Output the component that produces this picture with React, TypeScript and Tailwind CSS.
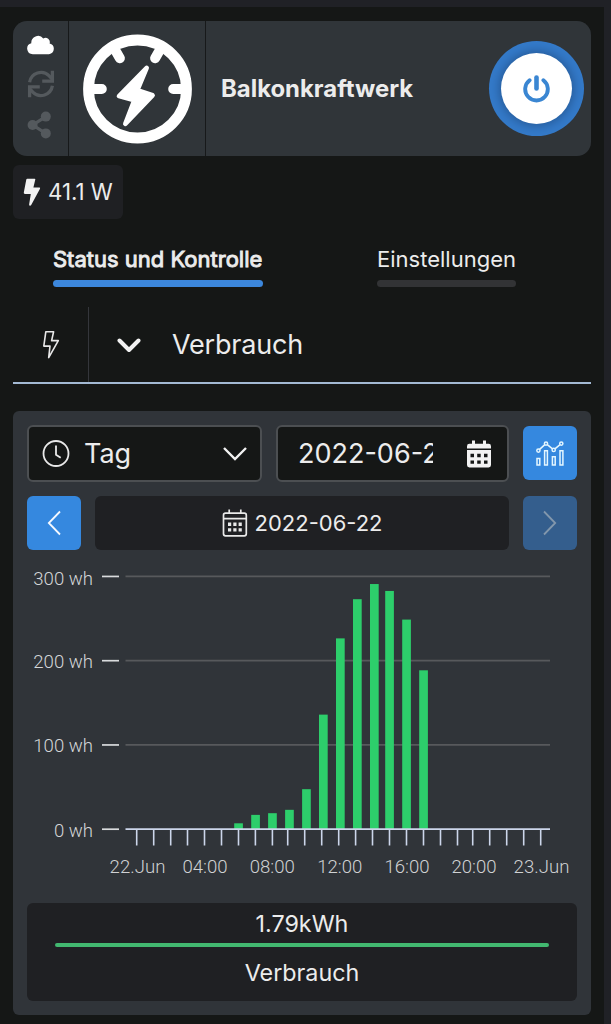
import type { ReactNode } from "react";

type Bar = { x: number; wh: number };

const ZERO_Y = 265.2;
const PX_PER_WH = 0.8425;

const GRID = [300, 200, 100, 0];

const TICKS = [
  109.7, 126.7, 143.7, 160.5, 177.5, 194.5, 211.5, 228.4, 245.4, 260.7, 277.7,
  294.7, 311.7, 328.6, 345.5, 362.5, 379.5, 396.5, 413.5, 430.5, 445.7, 462.7,
  479.7, 496.7, 513.7,
];

const HOURS = [
  { x: 110.5, label: "22.Jun" },
  { x: 178, label: "04:00" },
  { x: 245.3, label: "08:00" },
  { x: 312.8, label: "12:00" },
  { x: 380, label: "16:00" },
  { x: 447, label: "20:00" },
  { x: 514.5, label: "23.Jun" },
];

const BARS: Bar[] = [
  { x: 207.2, wh: 7 },
  { x: 224.2, wh: 17 },
  { x: 241.1, wh: 19 },
  { x: 258.1, wh: 23 },
  { x: 275.1, wh: 47.5 },
  { x: 292, wh: 136 },
  { x: 309, wh: 226.5 },
  { x: 326, wh: 273 },
  { x: 343, wh: 291 },
  { x: 358.2, wh: 282.8 },
  { x: 375.2, wh: 248.8 },
  { x: 392.2, wh: 188.6 },
];

function CloudIcon() {
  return (
    <svg width="28" height="20" viewBox="0 0 28 20" fill="#fff">
      <path d="M5.8 19.2A5.6 5.6 0 0 1 4.3 8.2A6.8 6.8 0 0 1 16.3 3.4A4.3 4.3 0 0 1 22.6 8.4A5.5 5.5 0 0 1 22 19.2Z" />
    </svg>
  );
}

function SyncIcon() {
  return (
    <svg width="28" height="28" viewBox="0 0 28 28" fill="none" stroke="#54595d" strokeWidth="3.3">
      <path d="M2.6 12.2A11.6 11.6 0 0 1 22.2 5.8L25 9" />
      <path d="M25.4 15.8A11.6 11.6 0 0 1 5.8 22.2L3 19" />
      <path d="M25.4.8V11.1H15.2M2.6 27.2V16.9H12.8" />
    </svg>
  );
}

function ShareIcon() {
  return (
    <svg width="28" height="28" viewBox="0 0 28 28" fill="#54595d">
      <path d="M18.7 5.6 5.8 14 18.7 22.4" fill="none" stroke="#54595d" strokeWidth="3.2" />
      <circle cx="18.8" cy="5.6" r="5" />
      <circle cx="5.6" cy="14" r="5" />
      <circle cx="18.8" cy="22.4" r="5" />
    </svg>
  );
}

function MeterIcon() {
  return (
    <svg width="110" height="110" viewBox="0 0 110 110" fill="none" stroke="#fff">
      <circle cx="55.5" cy="55" r="49" strokeWidth="10.8" />
      <path
        d="M8 55H19.8M91.2 55H102M34 17.5 37.9 24.2M77 17.5 73.1 24.2"
        strokeWidth="10"
        strokeLinecap="round"
      />
      <path
        d="M64.7 33.8 37 62 52.3 66.2 43.3 89.8 70.6 61.3 55.3 56.3Z"
        fill="#fff"
        strokeWidth="4.6"
        strokeLinejoin="round"
      />
    </svg>
  );
}

function PowerIcon() {
  return (
    <svg width="27" height="28" viewBox="0 0 27 28" fill="none" stroke="#3a86d2" strokeLinecap="round">
      <path d="M6.6 5.2A11.3 11.3 0 1 0 20.4 5.2" strokeWidth="3.9" />
      <path d="M13.5 2.6V13.4" strokeWidth="4.6" />
    </svg>
  );
}

function BoltIcon({ outline = false }: { outline?: boolean }) {
  return outline ? (
    <svg width="18" height="30" viewBox="0 0 18 30" fill="none" stroke="#e8e8e8" strokeWidth="1.6">
      <path d="M3.8 1.8H11.6L9.6 10.6H16.3L6.7 27.6 8 16.1H1.8Z" strokeLinejoin="round" />
    </svg>
  ) : (
    <svg width="18" height="29" viewBox="0 0 18 29" fill="#f2f2f2">
      <path d="M3.3 1.4Q3.5.7 4.3.7H11.6Q12.5.7 12.3 1.6L10.4 9.5H16.2Q17.6 9.6 17 10.8L8.2 27Q7.2 28.4 6.3 27.2 6 26.7 6.2 26L7.8 16.1H2Q.5 16 .8 14.6Z" />
    </svg>
  );
}

function ClockIcon() {
  return (
    <svg width="28" height="28" viewBox="0 0 28 28" fill="none" stroke="#e9e9e9" strokeWidth="1.8">
      <circle cx="14" cy="13.5" r="12.5" />
      <path d="M14 5.5V14.8L18.7 17.8" />
    </svg>
  );
}

function CalendarSolid() {
  return (
    <svg width="26" height="28" viewBox="0 0 26 28" fill="#f2f2f2">
      <path d="M1 8.6V6.2Q1 3.8 3.4 3.8H22.6Q25 3.8 25 6.2V8.6ZM6 .6H9V6H6ZM17 .6H20V6H17Z" />
      <path
        fillRule="evenodd"
        d="M1 10H25V25Q25 27.4 22.6 27.4H3.4Q1 27.4 1 25ZM4.5 13.8V17.2H8V13.8ZM11.2 13.8V17.2H14.7V13.8ZM18 13.8V17.2H21.5V13.8ZM4.5 20.4V23.8H8V20.4ZM11.2 20.4V23.8H14.7V20.4ZM18 20.4V23.8H21.5V20.4Z"
      />
    </svg>
  );
}

function CalendarOutline() {
  return (
    <svg width="26" height="28" viewBox="0 0 26 28" fill="none" stroke="#e9e9e9" strokeWidth="1.7">
      <rect x="1.5" y="4.2" width="22.8" height="22.6" rx="2" />
      <path d="M1.5 9.7H24.3M7.2.6V4.4M18.8.6V4.4" />
      <path
        d="M6 15.3H9.2M11.3 15.3H14.5M16.6 15.3H19.8M6 20.9H9.2M11.3 20.9H14.5M16.6 20.9H19.8"
        strokeWidth="3.4"
      />
    </svg>
  );
}

function StatsIcon() {
  return (
    <svg width="28" height="25" viewBox="0 0 28 25" fill="none" stroke="#e4f6ff" strokeWidth="1.5">
      <path d="M1 17.4H3.8V24H1ZM8.6 9.8H11.4V24H8.6ZM16.4 15.8H19.2V24H16.4ZM24 9.8H26.9V24H24Z" />
      <path d="M3.6 8.4 8.8 3.6M11.3 3.6 16.5 7.9M18.9 7.9 24.1 3.6" />
      <circle cx="2.4" cy="9.6" r="1.6" />
      <circle cx="10" cy="2.6" r="1.6" />
      <circle cx="17.7" cy="8.9" r="1.6" />
      <circle cx="25.3" cy="2.6" r="1.6" />
    </svg>
  );
}

function NavButton({ children, disabled = false }: { children: ReactNode; disabled?: boolean }) {
  return (
    <button
      disabled={disabled}
      className={`flex h-[54px] w-[54px] shrink-0 items-center justify-center rounded-md ${
        disabled ? "bg-[#345e8d]" : "bg-[#3588df]"
      }`}
    >
      {children}
    </button>
  );
}

function Chart() {
  return (
    <svg
      width="550"
      height="326"
      viewBox="0 0 550 326"
      className="mt-3.5 block overflow-visible font-['Roboto',sans-serif] text-[18.6px] font-light"
    >
      {GRID.map((wh) => {
        const y = ZERO_Y - wh * PX_PER_WH;
        return (
          <g key={wh}>
            <text x="66" y={y + (wh === 300 ? 9 : 7.5)} textAnchor="end" fill="#d4d6d8">
              {wh} wh
            </text>
            <path d={`M75 ${y}H92`} stroke="#d9dbdd" strokeWidth="1.7" />
            {wh > 0 && <path d={`M98.5 ${y}H523`} stroke="#57595c" strokeWidth="1.7" />}
          </g>
        );
      })}
      {BARS.map((b) => (
        <rect
          key={b.x}
          x={b.x}
          y={ZERO_Y - b.wh * PX_PER_WH}
          width="8.7"
          height={b.wh * PX_PER_WH}
          fill="#2dce6b"
        />
      ))}
      <path d={`M98.5 ${ZERO_Y}H523`} stroke="#ccd6eb" strokeWidth="1.7" />
      {TICKS.map((x) => (
        <path key={x} d={`M${x} ${ZERO_Y}V281.5`} stroke="#ccd6eb" strokeWidth="1.6" />
      ))}
      {HOURS.map((h) => (
        <text key={h.label} x={h.x} y="308.5" textAnchor="middle" fill="#d0d2d4">
          {h.label}
        </text>
      ))}
    </svg>
  );
}

export default function App() {
  return (
    <div className="h-[1024px] w-[611px] overflow-hidden bg-[#202126] pt-[7px] pr-[7px] font-['Inter',sans-serif] text-[#ececec]">
      <div className="h-full bg-[#151716] px-[13px] pt-3.5">
        {/* device header */}
        <header className="flex h-[135px] gap-px overflow-hidden rounded-[14px] bg-[#17191a]">
          <div className="flex w-[55px] flex-col items-center bg-[#303539] pt-[14px]">
            <CloudIcon />
            <div className="mt-[15px]">
              <SyncIcon />
            </div>
            <div className="mt-[13px]">
              <ShareIcon />
            </div>
          </div>
          <div className="flex w-[136px] items-center justify-center bg-[#303539]">
            <MeterIcon />
          </div>
          <div className="flex flex-1 items-center justify-between bg-[#303539] pr-[7px] pl-[15px]">
            <h1 className="text-[23.9px] font-bold">Balkonkraftwerk</h1>
            <button className="flex size-[95px] items-center justify-center rounded-full bg-[#347ac9]">
              <span className="flex size-[71px] items-center justify-center rounded-full bg-white shadow-[0_0_10px_2px_rgba(20,50,90,0.45)]">
                <PowerIcon />
              </span>
            </button>
          </div>
        </header>

        <div className="mt-[9px] flex h-[54px] w-[110px] items-center rounded-md bg-[#1f2023] pl-2.5">
          <BoltIcon />
          <span className="ml-[7px] text-[22.3px] whitespace-nowrap">41.1 W</span>
        </div>

        {/* tabs */}
        <nav className="mt-[26px] flex h-[42px] pl-10 text-[22px] leading-7 whitespace-nowrap">
          <div className="w-[210px]">
            <div className="[-webkit-text-stroke:0.9px_#ececec]">Status und Kontrolle</div>
            <div className="mt-[7px] h-[7px] rounded-full bg-[#3c87dc]" />
          </div>
          <div className="ml-[114px] w-[139px]">
            <div>Einstellungen</div>
            <div className="mt-[7px] h-[7px] rounded-full bg-[#323335]" />
          </div>
        </nav>

        <div className="mt-5 flex h-[77px] border-b-2 border-[#a3b9d3]">
          <div className="flex w-[76px] items-center justify-center border-r border-[#34363b]">
            <BoltIcon outline />
          </div>
          <div className="flex items-center pl-7">
            <svg width="24" height="16" viewBox="0 0 24 16" fill="none" stroke="#f2f2f2" strokeWidth="4">
              <path d="M2.5 3.5 12 13 21.5 3.5" strokeLinecap="round" strokeLinejoin="round" />
            </svg>
            <span className="ml-[31px] pt-px text-[27px] tracking-[-0.2px]">Verbrauch</span>
          </div>
        </div>

        {/* consumption panel */}
        <section className="mt-[27px] h-[604px] rounded-md bg-[#303439] px-3.5 pt-[14px]">
          <div className="flex h-[57px] items-start gap-3.5">
            <div className="flex h-[57px] w-[235px] items-center rounded-md border-2 border-[#4c4f52] bg-[#151716] pl-[13px]">
              <ClockIcon />
              <span className="ml-[14px] pt-0.5 text-[27px]">Tag</span>
              <svg className="mr-[13px] ml-auto" width="24" height="16" viewBox="0 0 24 16" fill="none" stroke="#f2f2f2" strokeWidth="2.4">
                <path d="M1 2 12 13 23 2" />
              </svg>
            </div>
            <div className="flex h-[57px] w-[233px] items-center justify-between rounded-md border-2 border-[#4c4f52] bg-[#151716] pr-[15px] pl-5">
              <span className="w-[135px] overflow-hidden pt-0.5 text-[27px] whitespace-nowrap">2022-06-22</span>
              <CalendarSolid />
            </div>
            <div className="pt-px">
              <NavButton>
                <StatsIcon />
              </NavButton>
            </div>
          </div>

          <div className="mt-3.5 flex gap-3.5">
            <NavButton>
              <svg width="14" height="26" viewBox="0 0 14 26" fill="none" stroke="#f4f8ff" strokeWidth="1.8">
                <path d="M13 1.5 1.8 13 13 24.5" />
              </svg>
            </NavButton>
            <div className="flex h-[54px] flex-1 items-center justify-center gap-[7px] rounded-md bg-[#1f2023]">
              <CalendarOutline />
              <span className="text-[22px]">2022-06-22</span>
            </div>
            <NavButton disabled>
              <svg width="14" height="26" viewBox="0 0 14 26" fill="none" stroke="#8297ac" strokeWidth="1.8">
                <path d="M1 1.5 12.2 13 1 24.5" />
              </svg>
            </NavButton>
          </div>

          <Chart />

          <div className="mt-[13px] h-[98px] rounded-md bg-[#1f2023] px-7 pt-[7px] text-center text-[23.3px] leading-7">
            <div>1.79kWh</div>
            <div className="mt-[5px] h-1 rounded-full bg-[#42b870]" />
            <div className="mt-[12px]">Verbrauch</div>
          </div>
        </section>
      </div>
    </div>
  );
}
